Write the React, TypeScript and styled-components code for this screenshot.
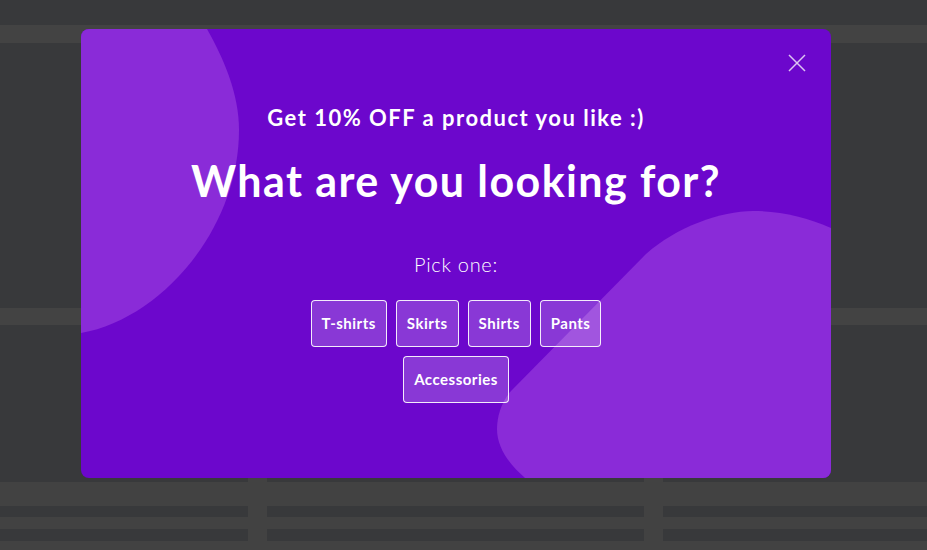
import React from "react";
import styled, { createGlobalStyle } from "styled-components";

const GlobalStyle = createGlobalStyle`
  html, body { margin: 0; padding: 0; }
  body {
    width: 927px;
    height: 550px;
    overflow: hidden;
    background: #38393b;
    font-family: Lato, "Open Sans", "Liberation Sans", sans-serif;
  }
  * { box-sizing: border-box; }
`;

const Page = styled.div`
  position: relative;
  width: 927px;
  height: 550px;
  display: flex;
  flex-direction: column;
  background: #38393b;
`;

const Stripe = styled.div<{ $top: number; $h: number }>`
  margin-top: ${(p) => p.$top}px;
  height: ${(p) => p.$h}px;
  background: #434343;
  flex-shrink: 0;
`;

const BottomGrid = styled.div`
  margin-top: 153px;
  flex: 1;
  display: grid;
  grid-template-columns: 248px 377px 1fr;
  column-gap: 19px;
  background: #424242;
`;

const Column = styled.div`
  display: flex;
  flex-direction: column;
`;

const Bar = styled.div<{ $h: number; $light?: boolean }>`
  height: ${(p) => p.$h}px;
  background: ${(p) => (p.$light ? "#424242" : "#38393b")};
`;

const Modal = styled.div`
  position: absolute;
  left: 81px;
  top: 29px;
  width: 750px;
  height: 449px;
  border-radius: 8px;
  overflow: hidden;
  background: #6c07cc;
  color: #fff;
`;

const Decor = styled.svg`
  position: absolute;
  left: 0;
  top: 0;
  width: 750px;
  height: 449px;
  pointer-events: none;
`;

const Content = styled.div`
  position: relative;
  display: flex;
  flex-direction: column;
  align-items: center;
  padding-top: 76px;
`;

const Subtitle = styled.div`
  font-size: 22px;
  line-height: 26px;
  font-weight: 700;
  letter-spacing: 1.5px;
`;

const Headline = styled.h1`
  margin: 25px 0 0;
  font-size: 43px;
  line-height: 50px;
  font-weight: 700;
  letter-spacing: 1.4px;
`;

const Prompt = styled.div`
  margin-top: 46px;
  font-size: 20px;
  line-height: 24px;
  font-weight: 300;
  letter-spacing: 0.7px;
`;

const Options = styled.div`
  margin-top: 24px;
  width: 320px;
  display: flex;
  flex-wrap: wrap;
  justify-content: center;
  gap: 9px;
`;

const Option = styled.button`
  font-family: inherit;
  font-size: 15px;
  line-height: 17px;
  font-weight: 700;
  letter-spacing: 0.5px;
  color: #fff;
  padding: 14px 10px;
  background: rgba(255, 255, 255, 0.2);
  border: 1px solid rgba(255, 255, 255, 0.9);
  border-radius: 4px;
  cursor: pointer;
`;

const Close = styled.button`
  position: absolute;
  right: 25px;
  top: 25px;
  width: 18px;
  height: 18px;
  padding: 0;
  border: none;
  background: none;
  cursor: pointer;
  display: flex;
`;

const options = ["T-shirts", "Skirts", "Shirts", "Pants", "Accessories"];

export default function App() {
  return (
    <>
      <GlobalStyle />
      <Page>
        <Stripe $top={25} $h={18} />
        <Stripe $top={265} $h={17} />
        <BottomGrid>
          {[0, 1, 2].map((i) => (
            <Column key={i}>
              <Bar $h={4} />
              <Bar $h={24} $light />
              <Bar $h={11} />
              <Bar $h={12} $light />
              <Bar $h={12} />
              <Bar $h={9} $light />
            </Column>
          ))}
        </BottomGrid>
        <Modal>
          <Decor viewBox="0 0 750 449">
            <path
              d="M0,0 L126,0 C143,30 158,65 158,101 C158,200 80,290 0,304 Z"
              fill="#8a2bd8"
            />
            <path
              d="M750,199 C725,188 700,182 672,182 C640,182 595,198 565,225 L430,362 C420,373 416,388 416,400 C416,420 430,437 444,449 L750,449 Z"
              fill="#8a2bd8"
            />
          </Decor>
          <Close aria-label="Close">
            <svg width="18" height="18" viewBox="0 0 18 18">
              <path
                d="M1,1 L17,17 M17,1 L1,17"
                stroke="#dcc4f2"
                strokeWidth="1.5"
                fill="none"
              />
            </svg>
          </Close>
          <Content>
            <Subtitle>Get 10% OFF a product you like :)</Subtitle>
            <Headline>What are you looking for?</Headline>
            <Prompt>Pick one:</Prompt>
            <Options>
              {options.map((o) => (
                <Option key={o}>{o}</Option>
              ))}
            </Options>
          </Content>
        </Modal>
      </Page>
    </>
  );
}
